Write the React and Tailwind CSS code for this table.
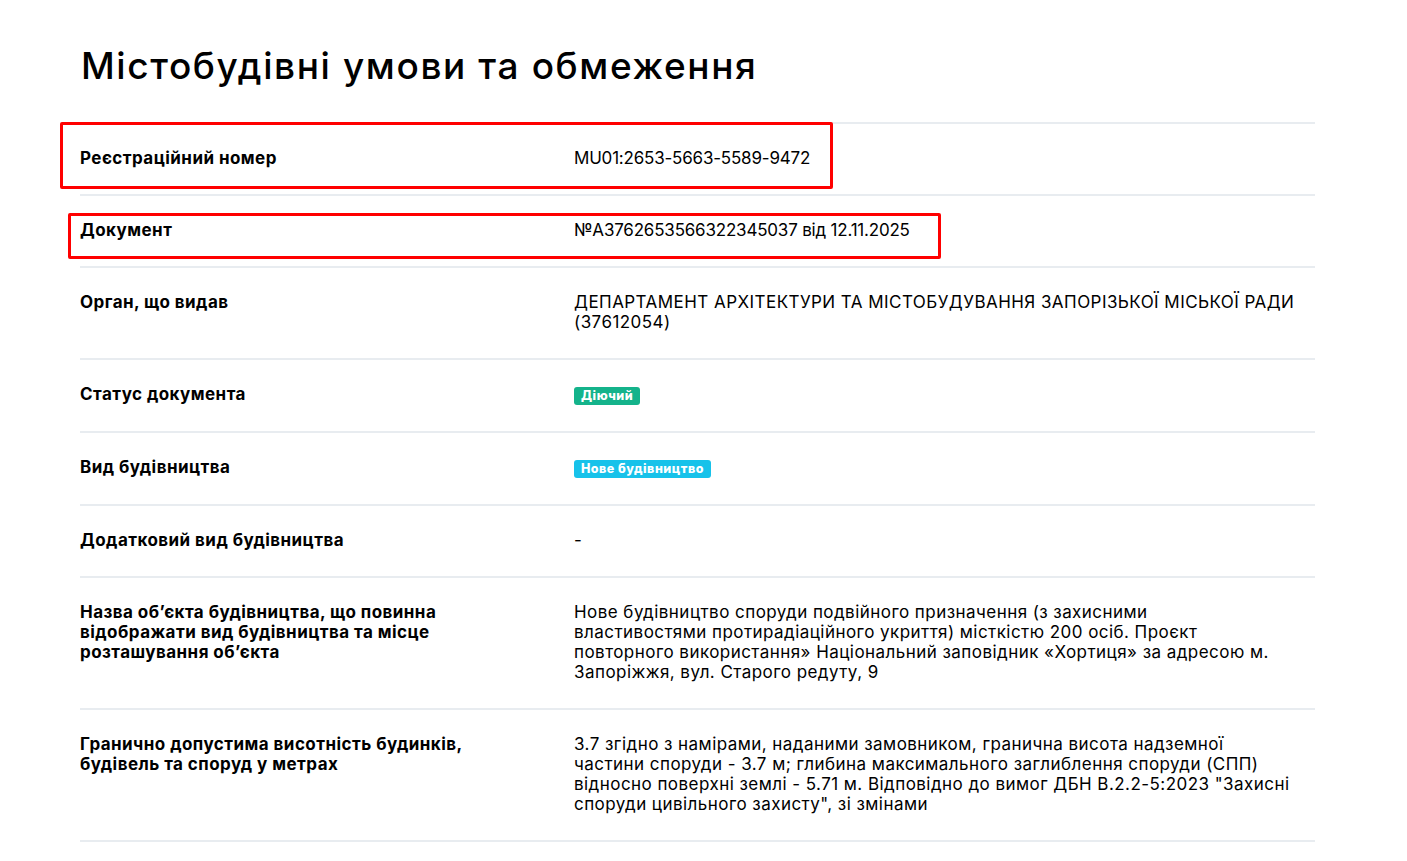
import React from "react";

const rows = [
  { label: "Реєстраційний номер", lines: ["MU01:2653-5663-5589-9472"], tight: true },
  { label: "Документ", lines: ["№A3762653566322345037 від 12.11.2025"], tight: true },
  {
    label: "Орган, що видав",
    lines: ["ДЕПАРТАМЕНТ АРХІТЕКТУРИ ТА МІСТОБУДУВАННЯ ЗАПОРІЗЬКОЇ МІСЬКОЇ РАДИ", "(37612054)"],
  },
  { label: "Статус документа", badge: { text: "Діючий", cls: "bg-[#14b38b]" } },
  { label: "Вид будівництва", badge: { text: "Нове будівництво", cls: "bg-[#17c2ea]" } },
  { label: "Додатковий вид будівництва", lines: ["-"] },
  {
    label: "Назва об’єкта будівництва, що повинна відображати вид будівництва та місце розташування об’єкта",
    lines: [
      "Нове будівництво споруди подвійного призначення (з захисними",
      "властивостями протирадіаційного укриття) місткістю 200 осіб. Проєкт",
      "повторного використання» Національний заповідник «Хортиця» за адресою м.",
      "Запоріжжя, вул. Старого редуту, 9",
    ],
  },
  {
    label: "Гранично допустима висотність будинків, будівель та споруд у метрах",
    lines: [
      "3.7 згідно з намірами, наданими замовником, гранична висота надземної",
      "частини споруди - 3.7 м; глибина максимального заглиблення споруди (СПП)",
      "відносно поверхні землі - 5.71 м. Відповідно до вимог ДБН В.2.2-5:2023 \"Захисні",
      "споруди цивільного захисту\", зі змінами",
    ],
  },
];

export default function App() {
  return (
    <div className="min-h-[861px] bg-white text-black font-['Inter','Noto_Sans',sans-serif]">
      <div className="pl-[80px] pr-[92px] pt-[42px]">
        <h1 className="text-[37px] leading-[48px] font-medium tracking-[1.6px] pl-[1px] mb-[32px]">
          Містобудівні умови та обмеження
        </h1>
        <div className="relative border-t-2 border-[#e8ecf0]">
          {rows.map((r, i) => (
            <div
              key={i}
              className="grid grid-cols-[494px_1fr] border-b-2 border-[#e8ecf0] pt-[24px] pb-[26px] text-[17px] leading-[20px] tracking-[0.45px]"
            >
              <div className="font-bold pr-[72px]">{r.label}</div>
              <div className={r.tight ? "tracking-[-0.2px]" : ""}>
                {r.badge ? (
                  <span
                    className={`inline-block ${r.badge.cls} text-white text-[12.5px] leading-[18px] font-extrabold tracking-[0.5px] px-[7px] rounded-[3px] mt-[2px]`}
                  >
                    {r.badge.text}
                  </span>
                ) : (
                  r.lines.map((l, j) => (
                    <div key={j} className="whitespace-nowrap">
                      {l}
                    </div>
                  ))
                )}
              </div>
            </div>
          ))}
          <div className="absolute left-[-20px] top-[-2px] w-[773px] h-[67px] border-[3px] border-[#ff0000] rounded-[2px]" />
          <div className="absolute left-[-12px] top-[89px] w-[873px] h-[46px] border-[3px] border-[#ff0000] rounded-[2px]" />
        </div>
      </div>
    </div>
  );
}
